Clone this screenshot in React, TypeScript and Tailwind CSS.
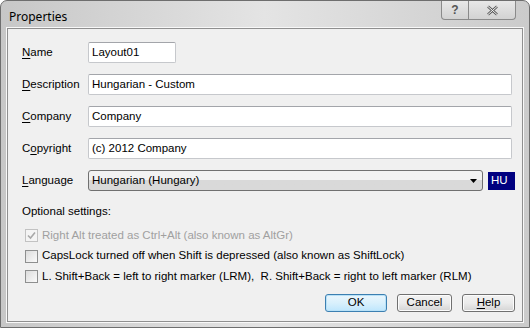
import { ReactNode } from 'react';

const font = { fontFamily: 'Tahoma, "Liberation Sans", Arial, sans-serif' };

function U({ children }: { children: ReactNode }) {
  return <span className="underline underline-offset-2">{children}</span>;
}

function TextBox({ value, className = '' }: { value: string; className?: string }) {
  return (
    <div
      className={`flex h-[21px] items-center rounded-[2px] border border-[#c6c8cc] border-t-[#a3a5aa] bg-white px-[3px] text-[11.5px] text-black ${className}`}
    >
      {value}
    </div>
  );
}

function Check({ label, disabled, checked }: { label: string; disabled?: boolean; checked?: boolean }) {
  return (
    <div className="flex h-[20.5px] items-center gap-[4px] pl-[3px]">
      <div
        className={`flex h-[13px] w-[13px] items-center justify-center border ${
          disabled ? 'border-[#c2c2c2] bg-[#f4f4f4]' : 'border-[#8e8f8f] bg-gradient-to-br from-[#dcdcdc] to-[#fafafa]'
        }`}
      >
        {checked && (
          <svg width="9" height="9" viewBox="0 0 9 9">
            <path d="M1 4.5 L3.5 7 L8 1.5" fill="none" stroke="#a8a8a8" strokeWidth="1.6" />
          </svg>
        )}
      </div>
      <span className={`whitespace-pre text-[11.5px] ${disabled ? 'text-[#a0a0a0]' : 'text-black'}`}>{label}</span>
    </div>
  );
}

function Btn({ children, width, primary }: { children: ReactNode; width: string; primary?: boolean }) {
  return (
    <div
      className={`flex h-[18px] items-center justify-center rounded-[3px] border text-[11.5px] text-black ${width} ${
        primary
          ? 'border-[#3c7fb1] bg-gradient-to-b from-[#eaf6fd] via-[#d9f0fc] to-[#bee6fd] shadow-[inset_0_0_0_1px_#b8e1f7]'
          : 'border-[#707070] bg-gradient-to-b from-[#f2f2f2] via-[#ebebeb] to-[#d4d4d4] shadow-[inset_0_0_0_1px_#fcfcfc]'
      }`}
    >
      {children}
    </div>
  );
}

export default function App() {
  return (
    <div className="h-[329px] w-[530px] bg-white" style={font}>
      <div className="flex h-[328px] w-[530px] flex-col rounded-t-[7px] border border-[#6e6e6e] bg-gradient-to-r from-[#c7c7c7] via-[#e4e4e4] to-[#cbcbcb] px-[6px] pb-[5px]">
        <div className="flex h-[27px] shrink-0 items-start">
          <span className="mt-[7px] pl-[2px] text-[12px] text-black" style={{ fontFamily: '"Noto Sans", "Liberation Sans", sans-serif' }}>
            Properties
          </span>
          <div className="ml-auto mr-[7px] flex h-[19px] overflow-hidden rounded-b-[4px] border border-t-0 border-[#8a8a8a] bg-gradient-to-b from-[#e8e8e8] to-[#d2d2d2]">
            <div className="flex w-[27px] items-center justify-center border-r border-[#8a8a8a] text-[12px] font-bold text-[#555]">
              ?
            </div>
            <div className="flex w-[46px] items-center justify-center">
              <svg width="13" height="11" viewBox="0 0 13 11">
                <path d="M2 1.5 L11 9.5 M11 1.5 L2 9.5" stroke="#5a5a5a" strokeWidth="2.6" />
                <path d="M2 1.5 L11 9.5 M11 1.5 L2 9.5" stroke="#f4f4f4" strokeWidth="1" />
              </svg>
            </div>
          </div>
        </div>
        <div className="flex flex-1 flex-col border border-[#8f8f8f] bg-[#f0f0f0] pl-[14px] pr-[7px] pt-[13px] pb-[9px] text-black shadow-[0_0_0_1px_#f8f8f8]">
          <div className="grid grid-cols-[66px_1fr] items-center gap-y-[11px]">
            <span className="text-[11.5px]">
              <U>N</U>ame
            </span>
            <TextBox value="Layout01" className="w-[88px]" />
            <span className="text-[11.5px]">
              <U>D</U>escription
            </span>
            <TextBox value="Hungarian - Custom" className="mr-[3px]" />
            <span className="text-[11.5px]">
              <U>C</U>ompany
            </span>
            <TextBox value="Company" className="mr-[3px]" />
            <span className="text-[11.5px]">
              C<U>o</U>pyright
            </span>
            <TextBox value="(c) 2012 Company" className="mr-[3px]" />
            <span className="text-[11.5px]">
              <U>L</U>anguage
            </span>
            <div className="flex items-center gap-[5px]">
              <div className="flex h-[21px] flex-1 items-center rounded-[3px] border border-[#707070] bg-gradient-to-b from-[#f2f2f2] from-50% to-[#d9d9d9] to-50% px-[3px] text-[11.5px]">
                Hungarian (Hungary)
                <svg className="ml-auto mr-[2px]" width="7" height="4" viewBox="0 0 7 4">
                  <path d="M0 0 H7 L3.5 4 Z" fill="#000" />
                </svg>
              </div>
              <div className="flex h-[18px] w-[27px] items-center px-[3px] text-[11.5px] text-white bg-[#000080]">HU</div>
            </div>
          </div>
          <div className="mt-[12px] text-[11.5px]">Optional settings:</div>
          <div className="mt-[5px] flex flex-col">
            <Check label="Right Alt treated as Ctrl+Alt (also known as AltGr)" disabled checked />
            <Check label="CapsLock turned off when Shift is depressed (also known as ShiftLock)" />
            <Check label="L. Shift+Back = left to right marker (LRM),  R. Shift+Back = right to left marker (RLM)" />
          </div>
          <div className="mt-auto flex justify-end gap-[10px]">
            <Btn width="w-[62px]" primary>
              OK
            </Btn>
            <Btn width="w-[55px]">Cancel</Btn>
            <Btn width="w-[53px]">
              <U>H</U>elp
            </Btn>
          </div>
        </div>
      </div>
    </div>
  );
}
